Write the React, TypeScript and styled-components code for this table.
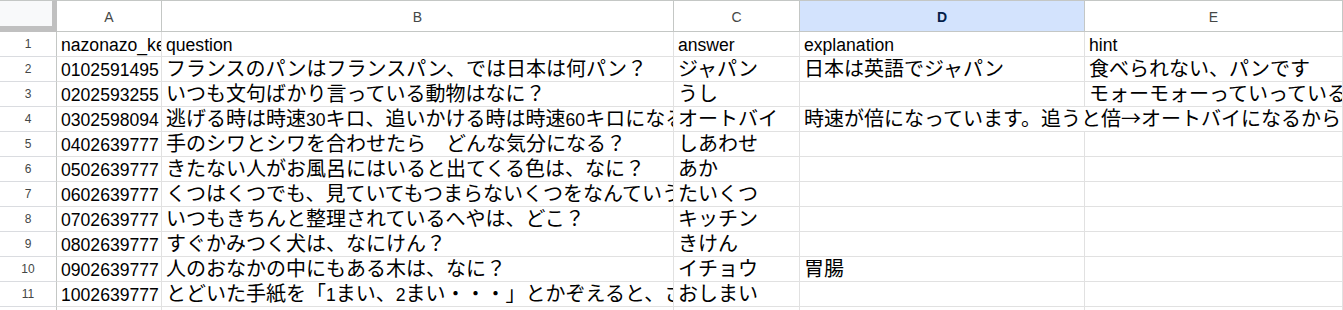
import React from "react";
import styled, { createGlobalStyle } from "styled-components";

const GlobalStyle = createGlobalStyle`
  html, body {
    margin: 0;
    padding: 0;
    background: #ffffff;
    overflow: hidden;
  }
`;

const Sheet = styled.div`
  display: grid;
  grid-template-columns: 57px 105px 512px 126px 285px 258px;
  grid-template-rows: 32px repeat(12, 25px);
  width: 1343px;
  height: 310px;
  overflow: hidden;
  font-family: "Liberation Sans", Arial, "Noto Sans CJK JP", sans-serif;
`;

const Corner = styled.div`
  box-sizing: border-box;
  background: #f8f9fa;
  border-top: 1px solid #c4c7c5;
  border-right: 5px solid #c0c0c0;
  border-bottom: 6px solid #c0c0c0;
`;

const ColHeader = styled.div<{ $active?: boolean }>`
  box-sizing: border-box;
  display: flex;
  align-items: center;
  justify-content: center;
  border-top: 1px solid #c4c7c5;
  border-right: 1px solid #c4c7c5;
  border-bottom: 1px solid #c4c7c5;
  background: ${(p) => (p.$active ? "#d3e3fd" : "#ffffff")};
  color: ${(p) => (p.$active ? "#041e49" : "#444746")};
  font-weight: ${(p) => (p.$active ? 700 : 400)};
  font-size: 14px;
  padding-top: 1px;
`;

const RowHeader = styled.div`
  box-sizing: border-box;
  display: flex;
  align-items: center;
  justify-content: center;
  border-right: 1px solid #c4c7c5;
  border-bottom: 1px solid #dadce0;
  color: #444746;
  font-size: 12px;
`;

const Cell = styled.div<{ $span?: number }>`
  box-sizing: border-box;
  grid-column: span ${(p) => p.$span ?? 1};
  border-right: 1px solid #e1e1e1;
  border-bottom: 1px solid #e1e1e1;
  padding: 1px 4px 0 4px;
  overflow: hidden;
  white-space: nowrap;
  font-size: 17.6px;
  line-height: 24px;
  color: #000000;
`;

const Cjk = styled.span`
  font-family: "Noto Sans CJK JP", sans-serif;
  font-size: 20px;
  line-height: 0;
`;

const CJK_RE = /([\u2190-\u21ff\u3000-\u30ff\u3400-\u9fff\uff00-\uffef]+)/;

const CellText = ({ text }: { text: string }) => (
  <>
    {text.split(CJK_RE).map((part, i) =>
      part === "" ? null : CJK_RE.test(part) ? (
        <Cjk key={i}>{part}</Cjk>
      ) : (
        <span key={i}>{part}</span>
      )
    )}
  </>
);

type Row = { cells: string[]; spanD?: boolean };

const columns = ["A", "B", "C", "D", "E"];

const rows: Row[] = [
  { cells: ["nazonazo_key", "question", "answer", "explanation", "hint"] },
  {
    cells: [
      "0102591495",
      "フランスのパンはフランスパン、では日本は何パン？",
      "ジャパン",
      "日本は英語でジャパン",
      "食べられない、パンです",
    ],
  },
  {
    cells: [
      "0202593255",
      "いつも文句ばかり言っている動物はなに？",
      "うし",
      "",
      "モォーモォーっていっているよ",
    ],
  },
  {
    cells: [
      "0302598094",
      "逃げる時は時速30キロ、追いかける時は時速60キロになるのりものは？",
      "オートバイ",
      "時速が倍になっています。追うと倍→オートバイになるから",
    ],
    spanD: true,
  },
  { cells: ["0402639777", "手のシワとシワを合わせたら　どんな気分になる？", "しあわせ", "", ""] },
  { cells: ["0502639777", "きたない人がお風呂にはいると出てくる色は、なに？", "あか", "", ""] },
  { cells: ["0602639777", "くつはくつでも、見ていてもつまらないくつをなんていう？", "たいくつ", "", ""] },
  { cells: ["0702639777", "いつもきちんと整理されているへやは、どこ？", "キッチン", "", ""] },
  { cells: ["0802639777", "すぐかみつく犬は、なにけん？", "きけん", "", ""] },
  { cells: ["0902639777", "人のおなかの中にもある木は、なに？", "イチョウ", "胃腸", ""] },
  {
    cells: [
      "1002639777",
      "とどいた手紙を「1まい、2まい・・・」とかぞえると、さいごは？",
      "おしまい",
      "",
      "",
    ],
  },
  { cells: ["", "", "", "", ""] },
];

const App = () => {
  return (
    <>
      <GlobalStyle />
      <Sheet>
        <Corner />
        {columns.map((c) => (
          <ColHeader key={c} $active={c === "D"}>
            {c}
          </ColHeader>
        ))}
        {rows.map((row, r) => (
          <React.Fragment key={r}>
            <RowHeader>{r + 1}</RowHeader>
            {row.cells.map((text, c) => (
              <Cell key={c} $span={row.spanD && c === 3 ? 2 : 1}>
                <CellText text={text} />
              </Cell>
            ))}
          </React.Fragment>
        ))}
      </Sheet>
    </>
  );
};

export default App;
